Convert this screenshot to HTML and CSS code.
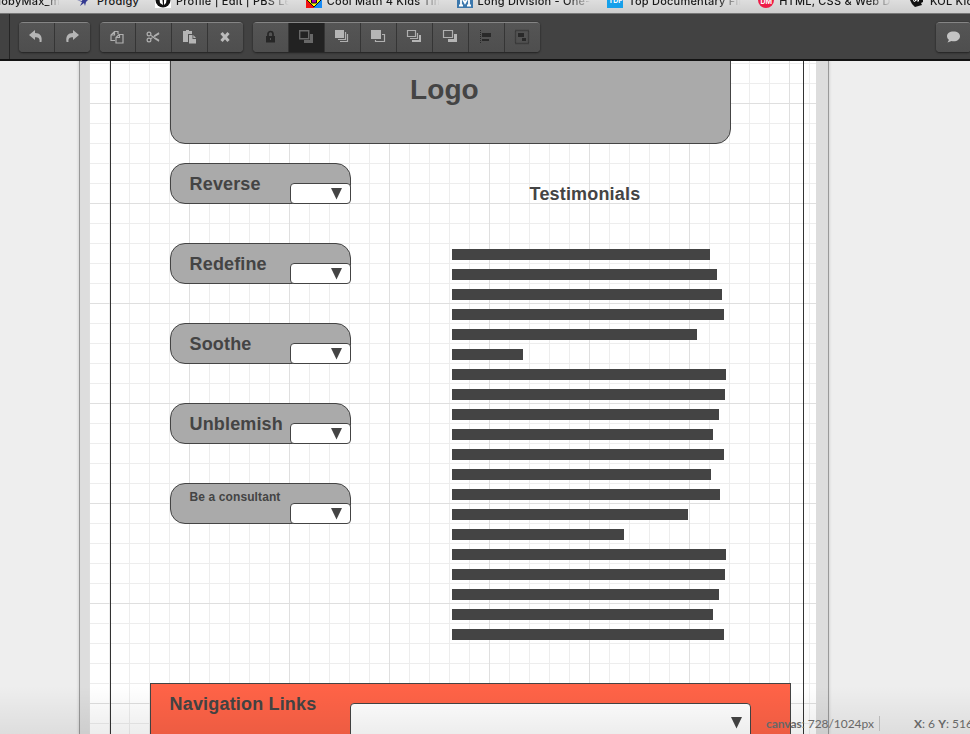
FILE: index.html
```html
<!DOCTYPE html>
<html lang="en">
<head>
<meta charset="utf-8">
<title>Wireframe editor</title>
<link rel="stylesheet" href="styles.css">
</head>
<body>
<div class="app">
  <nav class="bookmarks">
    <span class="bookmark first"><span class="name">MobyMax_m</span></span>
    <span class="bookmark"><svg class="fav" viewBox="0 0 16 16"><path d="M1 8l5 1 1-4 2 3 5-2-4 4-1 4-1-3-4 3 2-4z" fill="#343a91"/></svg><span class="name plain">Prodigy</span></span>
    <span class="bookmark"><svg class="fav" viewBox="0 0 16 16"><path d="M0 0h16v16H0z" fill="#fff"/><circle cx="8" cy="8" r="7.500" fill="#111"/><path d="M4 4l3-1 1 10-3-2zM9 4l3 1-1 6-2 2z" fill="#fff"/></svg><span class="name">Profile | Edit | PBS Le</span></span>
    <span class="bookmark"><svg class="fav" viewBox="0 0 16 16"><path d="M0 0h8v8H0z" fill="#090"/><path d="M8 0h8v8H8z" fill="#fa0"/><path d="M0 8h8v8H0z" fill="#f21313"/><path d="M8 8h8v8H8z" fill="#168af5"/><path d="M8 1l7 7-7 7-7-7z" fill="#ff0" stroke="#111"/><path d="M5.500 6h5v5h-5z" fill="#a0a" stroke="#111"/></svg><span class="name">Cool Math 4 Kids Tim</span></span>
    <span class="bookmark"><svg class="fav" viewBox="0 0 16 16"><path d="M0 0h16v16H0z" fill="#3c78ad"/><path d="M2 13.500h4M10 13.500h4M4 13V4l4 7 4-7v9" fill="none" stroke="#fff" stroke-width="1.800"/></svg><span class="name">Long Division - One-</span></span>
    <span class="bookmark"><span class="fav tdf">TDF</span><span class="name">Top Documentary Film</span></span>
    <span class="bookmark"><span class="fav dm">DM</span><span class="name">HTML, CSS &amp; Web De</span></span>
    <span class="bookmark"><svg class="fav" viewBox="0 0 16 16"><path d="M1 8l13-2v4l-2 1 1 2-7 2-3-3z" fill="#111"/><path d="M4 8.500l2 1 1-2 2 2 1-2" stroke="#fff" fill="none"/></svg><span class="name">KOL Kids</span></span>
  </nav>

  <header class="toolbar">
    <div class="edge"></div>
    <div class="group history">
      <button class="tool" aria-label="Undo"><svg viewBox="0 0 16 16"><path class="lit" d="M1 6l6-5v3c5 0 7.500 3 6.500 9h-2c.5-3.500-1-4.700-4.500-4.700V11z"/></svg></button>
      <button class="tool" aria-label="Redo"><svg viewBox="0 0 16 16"><path class="lit" d="M15 6L9 1v3C4 4 1.500 7 2.500 13h2C4 9.500 5.500 8.300 9 8.300V11z"/></svg></button>
    </div>
    <div class="group clipboard">
      <button class="tool" aria-label="Copy"><svg viewBox="0 0 16 16"><path class="line" d="M6 11.500H2V6l3.500-3.500H9V5M5.500 2.500V6H2M7 14V8.500L10 5.500h4V14zM10.500 5.500v3H7"/></svg></button>
      <button class="tool" aria-label="Cut"><svg viewBox="0 0 16 16"><g class="line"><circle cx="4" cy="5" r="1.900"/><circle cx="4" cy="11" r="1.900"/><path d="M5.500 6.200l8.500 5M5.500 9.800l8.500-5M9 7l4.500-3 .5.800M9 9l4.500 3 .5-.8"/></g></svg></button>
      <button class="tool" aria-label="Paste"><svg viewBox="0 0 16 16"><path class="lit" d="M2 2h3V1h3v1h3v3H7v8H2z"/><path class="lit" d="M8 6h3.500v4H15v4.500H8z"/><path class="lit" d="M12.300 6L15 9h-2.700z"/></svg></button>
      <button class="tool" aria-label="Delete"><svg viewBox="0 0 16 16"><path d="M4.500 4l7 8M11.500 4l-7 8" stroke="#bbb" stroke-width="3"/></svg></button>
    </div>
    <div class="group arrange">
      <button class="tool" aria-label="Lock"><svg viewBox="0 0 16 16"><path d="M4 7h9v6.500H4z" fill="#262626"/><path d="M6 7V5a2.500 2.500 0 015 0v2" fill="none" stroke="#262626" stroke-width="1.700"/><path d="M8 9h1v2H8z" fill="#555"/></svg></button>
      <button class="tool active" aria-label="Layer"><svg viewBox="0 0 16 16"><path d="M1.700 1.700h9v8h-9z" fill="none" stroke="#686868" stroke-width="1.400"/><path d="M12 5h3v9H6v-3h6z" fill="#686868"/></svg></button>
      <button class="tool" aria-label="Bring to front"><svg viewBox="0 0 16 16"><path class="lit" d="M1 1h9v8H1z"/><path class="line" d="M11.500 3v7.500H4M13.500 5v7.500H6"/></svg></button>
      <button class="tool" aria-label="Bring forward"><svg viewBox="0 0 16 16"><path class="lit" d="M1 1h10v9H1z"/><path class="line" d="M12 5.500h2.500v7h-9V11"/></svg></button>
      <button class="tool" aria-label="Send to back"><svg viewBox="0 0 16 16"><path class="line" d="M1.500 1.500h8v6h-8zM11.500 4v5.500H4"/><path class="lit" d="M13 6h2v7H6v-2h7z"/></svg></button>
      <button class="tool" aria-label="Send backward"><svg viewBox="0 0 16 16"><path class="line" d="M1.500 1.500h9v7h-9z"/><path class="lit" d="M12 5h3v8H6v-3h6z"/></svg></button>
      <button class="tool" aria-label="Align"><svg viewBox="0 0 16 16"><path d="M4 4h9v4H4zM4 10h7v2H4z" fill="#292929"/><path d="M2.500 1v14" stroke="#292929" stroke-dasharray="1 1"/></svg></button>
      <button class="tool" aria-label="Group"><svg viewBox="0 0 16 16"><path d="M1.500 1.500h13v13h-13z" fill="none" stroke="#292929" stroke-width="1.300" stroke-dasharray="1 1"/><path d="M4 4h6v4H4zM8 9h4v3H8z" fill="#292929"/></svg></button>
    </div>
    <div class="group comments">
      <button class="tool" aria-label="Comments"><svg viewBox="0 0 16 16"><path d="M8.500 2.500c-4 0-6.500 2-6.500 4.700 0 1.600.8 2.800 2 3.600L2.500 13.500 6.500 12c5 1 8.500-1.500 8.500-4.800 0-2.700-2.500-4.700-6.500-4.700z" fill="#c4c4c4"/></svg></button>
    </div>
  </header>

  <main class="workspace">
    <div class="canvas">
      <div class="margin-frame"></div>
      <div class="box logo">Logo</div>
      <div class="menu">
        <div class="box item">Reverse<span class="select"><svg class="arrow" viewBox="0 0 11 12"><path d="M0 0h11L5.500 11.500z"/></svg></span></div>
        <div class="box item">Redefine<span class="select"><svg class="arrow" viewBox="0 0 11 12"><path d="M0 0h11L5.500 11.500z"/></svg></span></div>
        <div class="box item">Soothe<span class="select"><svg class="arrow" viewBox="0 0 11 12"><path d="M0 0h11L5.500 11.500z"/></svg></span></div>
        <div class="box item">Unblemish<span class="select"><svg class="arrow" viewBox="0 0 11 12"><path d="M0 0h11L5.500 11.500z"/></svg></span></div>
        <div class="box item small">Be a consultant<span class="select"><svg class="arrow" viewBox="0 0 11 12"><path d="M0 0h11L5.500 11.500z"/></svg></span></div>
      </div>
      <h2 class="testimonials">Testimonials</h2>
      <div class="lines">
        <i style="width:258px"></i><i style="width:265px"></i><i style="width:270px"></i><i style="width:272px"></i><i style="width:245px"></i><i style="width:71px"></i><i style="width:274px"></i><i style="width:273px"></i><i style="width:267px"></i><i style="width:261px"></i><i style="width:272px"></i><i style="width:259px"></i><i style="width:268px"></i><i style="width:236px"></i><i style="width:172px"></i><i style="width:274px"></i><i style="width:273px"></i><i style="width:267px"></i><i style="width:261px"></i><i style="width:272px"></i>
      </div>
      <div class="navlinks"><span class="navtitle">Navigation Links</span><span class="select big"><svg class="arrow" viewBox="0 0 11 12"><path d="M0 0h11L5.500 11.500z"/></svg></span></div>
    </div>
    <footer class="status">
      <span class="size"><b>canvas</b>: 728/1024px</span>
      <span class="coords"><b>X</b>: 6 <b>Y</b>: 516px</span>
    </footer>
  </main>
</div>
</body>
</html>
```

FILE: styles.css
```css
* { box-sizing: border-box; }
body { margin: 0; font-family: "Liberation Sans", Arial, sans-serif; color: #444; }
.app { width: 970px; height: 734px; overflow: hidden; display: flex; flex-direction: column; background: #eee; }

.bookmarks { height: 14px; flex: none; display: flex; overflow: hidden; background: linear-gradient(#dedede, #cecece); border-bottom: 1px solid #777; font: 500 11px/14px Inter, sans-serif; letter-spacing: .22px; color: #181818; }
.bookmark { flex: none; width: 150.800px; height: 16px; margin-top: -6px; display: flex; gap: 5px; white-space: nowrap; }
.bookmark.first { width: 82px; }
.bookmark.first .name { margin-left: -9px; width: 70px; flex: none; }
.bookmark:nth-child(2) { width: 73px; }
.bookmark:nth-child(2) .fav { margin-left: -6px; }
.name { width: 115px; overflow: hidden; mask-image: linear-gradient(90deg, #000 78%, transparent 98%); }
.name.plain { mask-image: none; }
.fav { width: 16px; height: 16px; flex: none; margin-top: -2px; }
.tdf { background: #16a0ea; color: #fff; font-size: 7px; line-height: 18px; text-align: center; font-weight: 700; letter-spacing: 0; }
.dm { background: #ee1c47; color: #fff; font-size: 7px; line-height: 19px; text-align: center; font-weight: 700; border-radius: 8px; letter-spacing: 0; }

.toolbar { height: 47px; flex: none; display: flex; align-items: flex-start; background: #424242; border-bottom: 2px solid #121212; }
.edge { flex: none; width: 10px; height: 45px; border-right: 1px solid #252525; }
.group { flex: none; display: flex; height: 30px; margin: 8px 0 0 9px; border-radius: 4px; background: #525252; border-top: 1px solid #858585; box-shadow: 0 1px 2px #222, 0 0 1px #222; overflow: hidden; }
.tool { width: 36px; height: 29px; padding: 0 1px 2px 0; border: 0; border-right: 1px solid #353535; background: linear-gradient(#555, #4e4e4e); display: flex; align-items: center; justify-content: center; }
.tool:last-child { border-right: 0; width: 35px; }
.tool svg { width: 16px; height: 16px; flex: none; }
.tool.active { background: #222; margin-top: -1px; height: 30px; padding-bottom: 1px; }
.lit { fill: #b5b5b5; }
.line { fill: none; stroke: #b0b0b0; stroke-width: 1.200; }
.clipboard, .arrange { margin-left: 10px; }
.comments { margin-left: 396px; }

.workspace { position: relative; flex: 1; overflow: hidden; background: #eee; padding-left: 79px; }
.canvas {
  position: relative; width: 750px; height: 673px;
  border: solid #ddd; border-width: 0 13px 0 10px;
  background-color: #fff; background-clip: padding-box;
  background-origin: padding-box;
  background-image:
    linear-gradient(90deg, #dfdfdf 1px, transparent 1px),
    linear-gradient(#dfdfdf 1px, transparent 1px),
    linear-gradient(90deg, #ededed 1px, transparent 1px),
    linear-gradient(#ededed 1px, transparent 1px);
  background-size: 100px 100px, 100px 100px, 20px 20px, 20px 20px;
  background-position: 100px 0, 0 42px, 0 0, 0 2px;
}
.canvas::before, .canvas::after { content: ""; position: absolute; top: 0; bottom: 0; width: 1px; background: #999; }
.canvas::before { left: -10px; box-shadow: -1px 0 2px #ccc; }
.canvas::after { right: -13px; box-shadow: 1px 0 2px #ccc; }
.margin-frame { position: absolute; left: 21px; top: -10px; width: 694px; height: 700px; border: 1px solid #333; }
.box { background: #aaa; border: 1px solid #444; border-radius: 15px; font-weight: 700; }
.logo { position: absolute; left: 81px; top: -40px; width: 561px; height: 123px; font-size: 28px; line-height: 32px; padding: 52px 0 0 239px; letter-spacing: .1px; }
.menu { position: absolute; left: 81px; top: 102px; display: flex; flex-direction: column; gap: 39px; }
.item { position: relative; width: 181px; height: 41px; padding: 0 0 0 18.600px; font-size: 18px; line-height: 40px; letter-spacing: .14px; }
.item.small { font-size: 12px; line-height: 27px; letter-spacing: .1px; }
.select { position: absolute; right: -1px; bottom: -1px; width: 61px; height: 21px; background: #fff; border: 1px solid #444; border-radius: 4px; }
.arrow { position: absolute; right: 8px; top: 3.500px; width: 11px; height: 12px; fill: #444; }
.testimonials { position: absolute; left: 440.600px; top: 123px; margin: 0; font-size: 18px; line-height: 21px; letter-spacing: .17px; }
.lines { position: absolute; left: 363px; top: 188px; display: flex; flex-direction: column; gap: 9px; }
.lines i { display: block; height: 11px; background: #444; }
.navlinks { position: absolute; left: 61px; top: 622px; width: 641px; height: 100px; background: #ff6347; border: 1px solid #444; }
.navtitle { display: block; padding: 10px 0 0 18.600px; font-size: 18px; line-height: 21px; font-weight: 700; letter-spacing: .17px; }
.select.big { left: 199px; top: 19px; width: 401px; height: 80px; }
.select.big .arrow { top: 13px; }

.status { position: absolute; left: 0; right: 0; bottom: 0; height: 48px; display: flex; align-items: flex-end; background: linear-gradient(transparent, rgba(0,0,0,.07)); font: 12px/16px Lato, sans-serif; color: #686868; white-space: nowrap; }
.size { flex: none; margin-left: 766px; width: 114px; height: 15px; margin-bottom: 3px; border-right: 1px solid #bbb; letter-spacing: -.05px; }
.coords { margin-left: 34px; height: 15px; margin-bottom: 3px; }
```
